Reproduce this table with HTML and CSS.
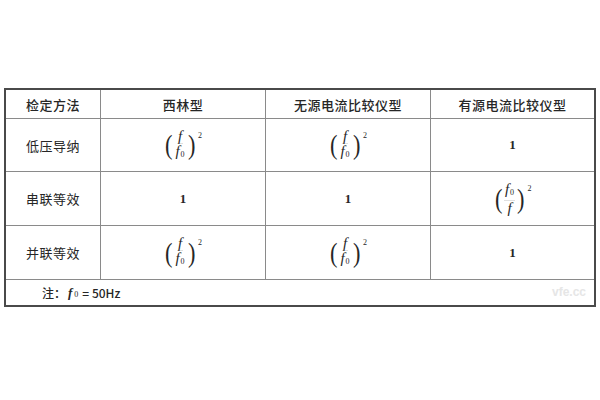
FILE: index.html
```html
<!DOCTYPE html>
<html lang="zh">
<head>
<meta charset="utf-8">
<link rel="stylesheet" href="styles.css">
</head>
<body>
<div class="page">
  <div class="grid">
    <div class="cell head">检定方法</div>
    <div class="cell head">西林型</div>
    <div class="cell head">无源电流比较仪型</div>
    <div class="cell head last">有源电流比较仪型</div>

    <div class="cell label">低压导纳</div>
    <div class="cell"><span class="expr"><span class="paren">(</span><span class="frac"><span class="num"><i>f</i></span><span class="den"><i>f</i><span class="sub">0</span></span></span><span class="paren">)</span><span class="sup">2</span></span></div>
    <div class="cell"><span class="expr"><span class="paren">(</span><span class="frac"><span class="num"><i>f</i></span><span class="den"><i>f</i><span class="sub">0</span></span></span><span class="paren">)</span><span class="sup">2</span></span></div>
    <div class="cell last"><span class="one">1</span></div>

    <div class="cell label">串联等效</div>
    <div class="cell"><span class="one">1</span></div>
    <div class="cell"><span class="one">1</span></div>
    <div class="cell last"><span class="expr"><span class="paren">(</span><span class="frac"><span class="num"><i>f</i><span class="sub">0</span></span><span class="den"><i>f</i></span></span><span class="paren">)</span><span class="sup">2</span></span></div>

    <div class="cell label">并联等效</div>
    <div class="cell"><span class="expr"><span class="paren">(</span><span class="frac"><span class="num"><i>f</i></span><span class="den"><i>f</i><span class="sub">0</span></span></span><span class="paren">)</span><span class="sup">2</span></span></div>
    <div class="cell"><span class="expr"><span class="paren">(</span><span class="frac"><span class="num"><i>f</i></span><span class="den"><i>f</i><span class="sub">0</span></span></span><span class="paren">)</span><span class="sup">2</span></span></div>
    <div class="cell last"><span class="one">1</span></div>

    <div class="note">注：<i class="nf">f</i><span class="sub">0</span> = 50Hz<span class="mark">vfe.cc</span></div>
  </div>
</div>
</body>
</html>
```

FILE: styles.css
```css
html, body {
  margin: 0;
  padding: 0;
  background: #ffffff;
}
.page {
  width: 600px;
  height: 400px;
  padding: 88px 0 0 4px;
  box-sizing: border-box;
}
.grid {
  width: 592px;
  box-sizing: border-box;
  border: 2px solid #4a4a4a;
  display: grid;
  grid-template-columns: 95px 165px 165px 1fr;
  grid-template-rows: 29px 53px 54px 54px 25px;
  color: #262626;
  font-family: "Noto Sans CJK SC", sans-serif;
}
.cell {
  border-right: 1px solid #8a8a8a;
  border-bottom: 1px solid #8a8a8a;
  display: flex;
  align-items: center;
  justify-content: center;
  font-size: 13px;
}
.cell.last {
  border-right: none;
}
.head {
  font-weight: 500;
  letter-spacing: 0.5px;
}
.label {
  letter-spacing: 0.5px;
}
.one {
  font-family: "Liberation Serif", serif;
  font-weight: bold;
  font-size: 13px;
}
.expr {
  display: inline-flex;
  align-items: center;
  font-family: "Liberation Serif", serif;
  position: relative;
  padding-right: 6px;
}
.paren {
  font-size: 28px;
  line-height: 28px;
  font-weight: 300;
  transform: scaleX(0.8);
}
.frac {
  display: inline-flex;
  flex-direction: column;
  align-items: center;
  font-size: 15px;
  line-height: 12px;
  margin: 0 1px;
}
.num {
  padding: 0 1px 1px;
  border-bottom: 1px solid #e0e0e0;
}
.den {
  padding: 1px 1px 0;
}
.sub {
  font-size: 8px;
  vertical-align: -1px;
  margin-left: 1px;
}
.sup {
  position: absolute;
  right: 0;
  top: 1px;
  font-size: 8px;
}
.note {
  grid-column: 1 / -1;
  display: flex;
  align-items: center;
  padding-left: 36px;
  font-size: 12px;
  font-weight: 500;
  position: relative;
}
.nf {
  font-family: "Liberation Serif", serif;
  font-weight: bold;
  font-size: 13px;
  margin-left: 2px;
}
.note .sub {
  font-family: "Liberation Serif", serif;
  margin-left: 2px;
  margin-right: 4px;
  margin-top: 4px;
}
.mark {
  position: absolute;
  right: 8px;
  top: 5px;
  font-family: "Liberation Sans", sans-serif;
  font-weight: bold;
  font-size: 12px;
  color: #e6e6e6;
}
```
